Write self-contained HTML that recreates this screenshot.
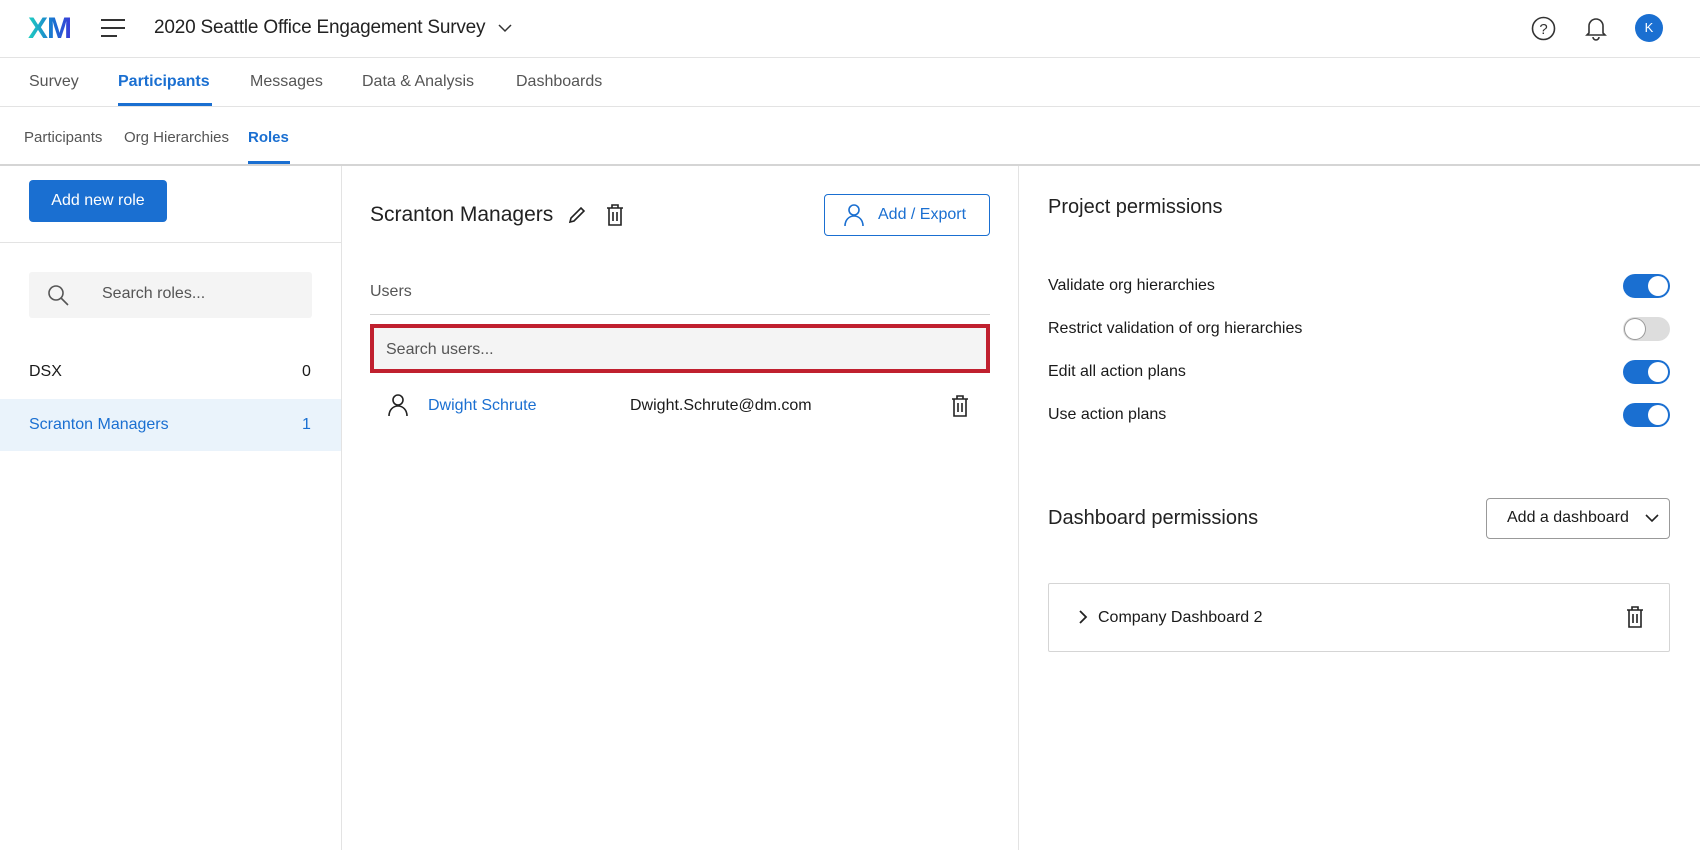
<!DOCTYPE html>
<html><head><meta charset="utf-8"><style>
*{box-sizing:border-box;margin:0;padding:0}
body{width:1700px;height:850px;overflow:hidden;background:#fff;font-family:"Liberation Sans",sans-serif;color:#1a1a1a;position:relative}
.a{position:absolute;white-space:nowrap}
.hl{position:absolute;left:0;width:1700px;height:1px;background:#e3e3e3}
.tab{font-size:16px;color:#555}
.tog{position:absolute;left:1623px;width:47px;height:24px;border-radius:12px;background:#1a6fd1}
.tog::after{content:"";position:absolute;top:2px;right:2px;width:20px;height:20px;border-radius:50%;background:#fff}
.tog.off{background:#ddd}
.tog.off::after{right:auto;left:2px;box-shadow:0 0 0 1px #999}
.perm{font-size:16px;color:#1a1a1a}
</style></head><body>
<!-- header -->
<div class="a" style="left:28px;top:12px;font-size:30px;font-weight:bold;letter-spacing:-1px;background:linear-gradient(90deg,#1fd1c0,#1a6fd1 60%,#3b3bd9);-webkit-background-clip:text;color:transparent">XM</div>
<svg class="a" style="left:100px;top:18px" width="26" height="20"><path d="M1 2h24M1 10h24M1 18h16" stroke="#333" stroke-width="2"/></svg>
<div class="a" style="left:154px;top:17px;font-size:19px;color:#222;letter-spacing:-0.2px">2020 Seattle Office Engagement Survey</div>
<svg class="a" style="left:498px;top:23px" width="14" height="10"><path d="M1 2l6 6 6-6" stroke="#333" stroke-width="1.5" fill="none"/></svg>
<svg class="a" style="left:1531px;top:16px" width="25" height="25"><circle cx="12.5" cy="12.5" r="11" stroke="#333" stroke-width="1.6" fill="none"/><text x="12.5" y="18" font-size="15" text-anchor="middle" font-family="Liberation Sans" fill="#333">?</text></svg>
<svg class="a" style="left:1585px;top:15px" width="22" height="26"><path d="M4 18V11a7 7 0 0114 0v7l2 2H2z M8 22a3 3 0 006 0" stroke="#333" stroke-width="1.6" fill="none"/></svg>
<div class="a" style="left:1635px;top:14px;width:28px;height:28px;border-radius:50%;background:#1a6fd1;color:#fff;font-size:13px;text-align:center;line-height:28px">K</div>
<div class="hl" style="top:57px"></div>
<!-- tabs -->
<div class="a tab" style="left:29px;top:73px">Survey</div>
<div class="a tab" style="left:118px;top:73px;color:#1a6fd1;font-weight:bold">Participants</div>
<div class="a" style="left:118px;top:103px;width:94px;height:3px;background:#1a6fd1"></div>
<div class="a tab" style="left:250px;top:73px">Messages</div>
<div class="a tab" style="left:362px;top:73px">Data &amp; Analysis</div>
<div class="a tab" style="left:516px;top:73px">Dashboards</div>
<div class="hl" style="top:106px"></div>
<div class="a" style="left:24px;top:129px;font-size:15px;color:#555">Participants</div>
<div class="a" style="left:124px;top:129px;font-size:15px;color:#555">Org Hierarchies</div>
<div class="a" style="left:248px;top:129px;font-size:15px;color:#1a6fd1;font-weight:bold">Roles</div>
<div class="a" style="left:248px;top:161px;width:42px;height:3px;background:#1a6fd1"></div>
<div class="hl" style="top:164px;height:2px;background:#d5d5d5"></div>
<!-- columns -->
<div class="a" style="left:341px;top:166px;width:1px;height:684px;background:#e3e3e3"></div>
<div class="a" style="left:1018px;top:166px;width:1px;height:684px;background:#e3e3e3"></div>
<!-- left -->
<div class="a" style="left:29px;top:180px;width:138px;height:42px;background:#1a6fd1;border-radius:4px;color:#fff;font-size:16px;text-align:center;line-height:42px">Add new role</div>
<div class="a" style="left:0;top:242px;width:341px;height:1px;background:#e3e3e3"></div>
<div class="a" style="left:29px;top:272px;width:283px;height:46px;background:#f4f4f4;border-radius:3px"></div>
<svg class="a" style="left:47px;top:284px" width="24" height="24"><circle cx="9" cy="9" r="7" stroke="#555" stroke-width="1.6" fill="none"/><path d="M14 14l7 7" stroke="#555" stroke-width="1.6"/></svg>
<div class="a" style="left:102px;top:285px;font-size:16px;color:#555">Search roles...</div>
<div class="a" style="left:29px;top:363px;font-size:16px">DSX</div>
<div class="a" style="left:302px;top:363px;font-size:16px">0</div>
<div class="a" style="left:0;top:399px;width:341px;height:52px;background:#eaf3fb"></div>
<div class="a" style="left:29px;top:416px;font-size:16px;color:#1a6fd1">Scranton Managers</div>
<div class="a" style="left:302px;top:416px;font-size:16px;color:#1a6fd1">1</div>
<!-- middle -->
<div class="a" style="left:370px;top:203px;font-size:21px;color:#222">Scranton Managers</div>
<svg class="a" style="left:567px;top:205px" width="20" height="20"><path d="M3 17l1-4L14 3l3 3L7 16z" stroke="#222" stroke-width="1.6" fill="none"/></svg>
<svg class="a" style="left:605px;top:203px" width="20" height="24"><path d="M2 5h16M7 5V2h6v3M4 5v17h12V5M8 9v9M12 9v9" stroke="#222" stroke-width="1.6" fill="none"/></svg>
<div class="a" style="left:824px;top:194px;width:166px;height:42px;border:1.5px solid #1a6fd1;border-radius:4px"></div>
<svg class="a" style="left:843px;top:203px" width="22" height="24"><circle cx="11" cy="7" r="5" stroke="#1a6fd1" stroke-width="1.6" fill="none"/><path d="M2 23c0-6 4-10 9-10s9 4 9 10" stroke="#1a6fd1" stroke-width="1.6" fill="none"/></svg>
<div class="a" style="left:878px;top:206px;font-size:16px;color:#1a6fd1">Add / Export</div>
<div class="a" style="left:370px;top:283px;font-size:16px;color:#555">Users</div>
<div class="a" style="left:370px;top:314px;width:620px;height:1px;background:#d5d5d5"></div>
<div class="a" style="left:370px;top:324px;width:620px;height:49px;border:4px solid #c0202f;background:#f4f4f4"></div>
<div class="a" style="left:386px;top:341px;font-size:16px;color:#555">Search users...</div>
<svg class="a" style="left:388px;top:394px" width="20" height="22"><circle cx="10" cy="6" r="5" stroke="#222" stroke-width="1.6" fill="none"/><path d="M1 22c0-6 4-10 9-10s9 4 9 10" stroke="#222" stroke-width="1.6" fill="none"/></svg>
<div class="a" style="left:428px;top:397px;font-size:16px;color:#1a6fd1">Dwight Schrute</div>
<div class="a" style="left:630px;top:397px;font-size:16px">Dwight.Schrute@dm.com</div>
<svg class="a" style="left:950px;top:394px" width="20" height="24"><path d="M2 5h16M7 5V2h6v3M4 5v17h12V5M8 9v9M12 9v9" stroke="#222" stroke-width="1.6" fill="none"/></svg>
<!-- right -->
<div class="a" style="left:1048px;top:196px;font-size:20px;color:#222">Project permissions</div>
<div class="a perm" style="left:1048px;top:277px">Validate org hierarchies</div><div class="tog" style="top:274px"></div>
<div class="a perm" style="left:1048px;top:320px">Restrict validation of org hierarchies</div><div class="tog off" style="top:317px"></div>
<div class="a perm" style="left:1048px;top:363px">Edit all action plans</div><div class="tog" style="top:360px"></div>
<div class="a perm" style="left:1048px;top:406px">Use action plans</div><div class="tog" style="top:403px"></div>
<div class="a" style="left:1048px;top:507px;font-size:20px;color:#222">Dashboard permissions</div>
<div class="a" style="left:1486px;top:498px;width:184px;height:41px;border:1px solid #999;border-radius:4px"></div>
<div class="a" style="left:1507px;top:509px;font-size:16px">Add a dashboard</div>
<svg class="a" style="left:1645px;top:513px" width="14" height="10"><path d="M1 2l6 6 6-6" stroke="#222" stroke-width="1.6" fill="none"/></svg>
<div class="a" style="left:1048px;top:583px;width:622px;height:69px;border:1px solid #d5d5d5;border-radius:2px"></div>
<svg class="a" style="left:1078px;top:610px" width="10" height="14"><path d="M2 1l6 6-6 6" stroke="#222" stroke-width="1.8" fill="none"/></svg>
<div class="a" style="left:1098px;top:609px;font-size:16px">Company Dashboard 2</div>
<svg class="a" style="left:1625px;top:605px" width="20" height="24"><path d="M2 5h16M7 5V2h6v3M4 5v17h12V5M8 9v9M12 9v9" stroke="#222" stroke-width="1.6" fill="none"/></svg>
</body></html>
